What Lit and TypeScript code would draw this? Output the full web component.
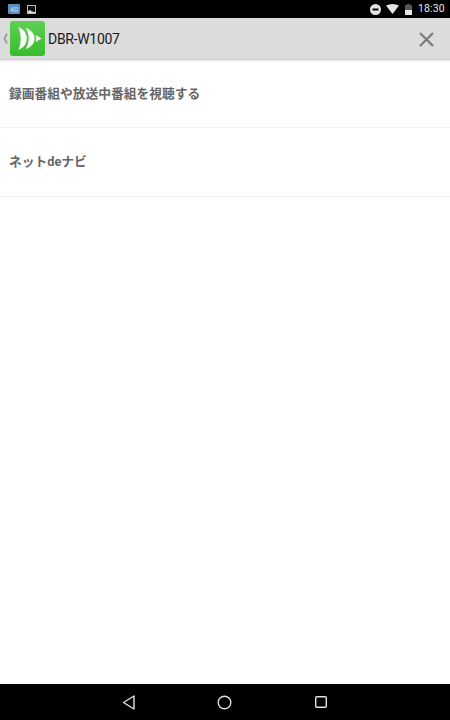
import { LitElement, html, css } from "lit";
import { customElement } from "lit/decorators.js";

@customElement("app-root")
export class AppRoot extends LitElement {
  static styles = css`
    :host { display: flex; flex-direction: column; width: 450px; height: 720px; background: #fff; font-family: Roboto, "Noto Sans CJK JP", sans-serif; overflow: hidden; }
    .status { height: 18px; flex: none; background: #000; display: flex; align-items: center; padding: 0 6px 0 8px; color: #e6e6e6; font-size: 10.5px; }
    .status svg { display: block; flex: none; }
    .sleft { display: flex; gap: 7px; align-items: center; }
    .sright { margin-left: auto; display: flex; align-items: center; }
    .wifi { margin-left: 5px; }
    .batt { margin-left: 6px; }
    .time { margin-left: 6px; width: 26px; line-height: 18px; letter-spacing: 0.1px; }
    .bar { height: 41px; flex: none; background: #dcdcdc; border-bottom: 1px solid #cfcfcf; box-shadow: 0 1px 2px rgba(0,0,0,.12); display: flex; align-items: center; }
    .chev { margin-left: 3px; flex: none; }
    .logo { margin-left: 2px; flex: none; }
    .title { margin-left: 3px; font-size: 14px; letter-spacing: -0.3px; color: #1a1a1a; font-family: Roboto, sans-serif; }
    .close { margin-left: auto; margin-right: 16px; margin-top: 2px; flex: none; }
    .list { flex: 1; }
    .row { box-sizing: border-box; height: 68px; border-bottom: 1px solid #f3f3f3; padding: 0 0 2px 9px; display: flex; align-items: center; font-size: 12.75px; font-weight: 700; color: #666; }
    .row + .row { height: 69px; padding-bottom: 4px; }
    .nav { height: 36px; flex: none; background: #000; display: flex; align-items: center; }
    .nav svg { display: block; flex: none; }
    .nav .b { margin-left: 122px; }
    .nav .h { margin-left: 82px; }
    .nav .r { margin-left: 83px; }
  `;
  render() {
    return html`
      <div class="status">
        <div class="sleft">
          <svg width="12" height="10" viewBox="0 0 12 10"><rect width="12" height="10" rx="1" fill="#5b8fc4"/><text x="6" y="7.600" text-anchor="middle" font-size="7" fill="#cfe0f0" font-family="Roboto">40</text></svg>
          <svg width="9" height="9" viewBox="0 0 9 9"><rect x=".5" y=".5" width="8" height="8" fill="#111" stroke="#bbb"/><path d="M1 8V6l2-1 2 1.500 3 .5v1z" fill="#ddd"/></svg>
        </div>
        <div class="sright">
          <svg width="11" height="11" viewBox="0 0 11 11"><circle cx="5.500" cy="5.500" r="5.500" fill="#e6e6e6"/><rect x="2.500" y="4.500" width="6" height="2" fill="#000"/></svg>
          <svg class="wifi" width="13" height="10" viewBox="0 0 13 10"><path d="M0 1.500Q6.500-1.500 13 1.500L6.500 10z" fill="#e6e6e6"/></svg>
          <svg class="batt" width="7" height="11" viewBox="0 0 7 11"><rect x="2" width="3" height="1.500" fill="#555"/><rect y="1" width="7" height="5" fill="#555"/><rect y="6" width="7" height="5" fill="#e6e6e6"/></svg>
          <span class="time">18:30</span>
        </div>
      </div>
      <div class="bar">
        <svg class="chev" width="5" height="11" viewBox="0 0 5 11"><path d="M4 .5 1.500 5.500 4 10.500" fill="none" stroke="#a0a0a0" stroke-width="2"/></svg>
        <svg class="logo" width="35" height="35" viewBox="0 0 35 35">
          <defs><linearGradient id="g" x1="0" y1="0" x2="0" y2="1"><stop offset="0" stop-color="#5fd052"/><stop offset="1" stop-color="#36bd2c"/></linearGradient></defs>
          <rect width="35" height="35" rx="3" fill="url(#g)"/>
          <path d="M8.300 6C11.500 13 11.500 22 8.300 29C14 27 16.800 22 16.800 17.500C16.800 13 14 8 8.300 6Z" fill="#fff"/>
          <path d="M15.500 7C19.800 13 19.800 22 15.500 28C21.500 26 24.500 22 24.500 17.500C24.500 13 21.500 9 15.500 7Z" fill="#fff"/>
          <path d="M25.500 14 31.500 17.500 25.500 21Q26.700 17.500 25.500 14Z" fill="#fff"/>
        </svg>
        <span class="title">DBR-W1007</span>
        <svg class="close" width="15" height="15" viewBox="0 0 15 15"><path d="M1 1 14 14M14 1 1 14" stroke="#7a7a7a" stroke-width="2.200" fill="none"/></svg>
      </div>
      <div class="list">
        <div class="row">録画番組や放送中番組を視聴する</div>
        <div class="row">ネットdeナビ</div>
      </div>
      <div class="nav">
        <svg class="b" width="13" height="15" viewBox="0 0 13 15"><path d="M12 1 1.500 7.500 12 14z" fill="none" stroke="#e0e0e0" stroke-width="1.400" stroke-linejoin="round"/></svg>
        <svg class="h" width="15" height="15" viewBox="0 0 15 15"><circle cx="7.500" cy="7.500" r="6.300" fill="none" stroke="#e0e0e0" stroke-width="1.400"/></svg>
        <svg class="r" width="12" height="12" viewBox="0 0 12 12"><rect x=".7" y=".7" width="10.600" height="10.600" rx="1" fill="none" stroke="#e0e0e0" stroke-width="1.400"/></svg>
      </div>
    `;
  }
}
